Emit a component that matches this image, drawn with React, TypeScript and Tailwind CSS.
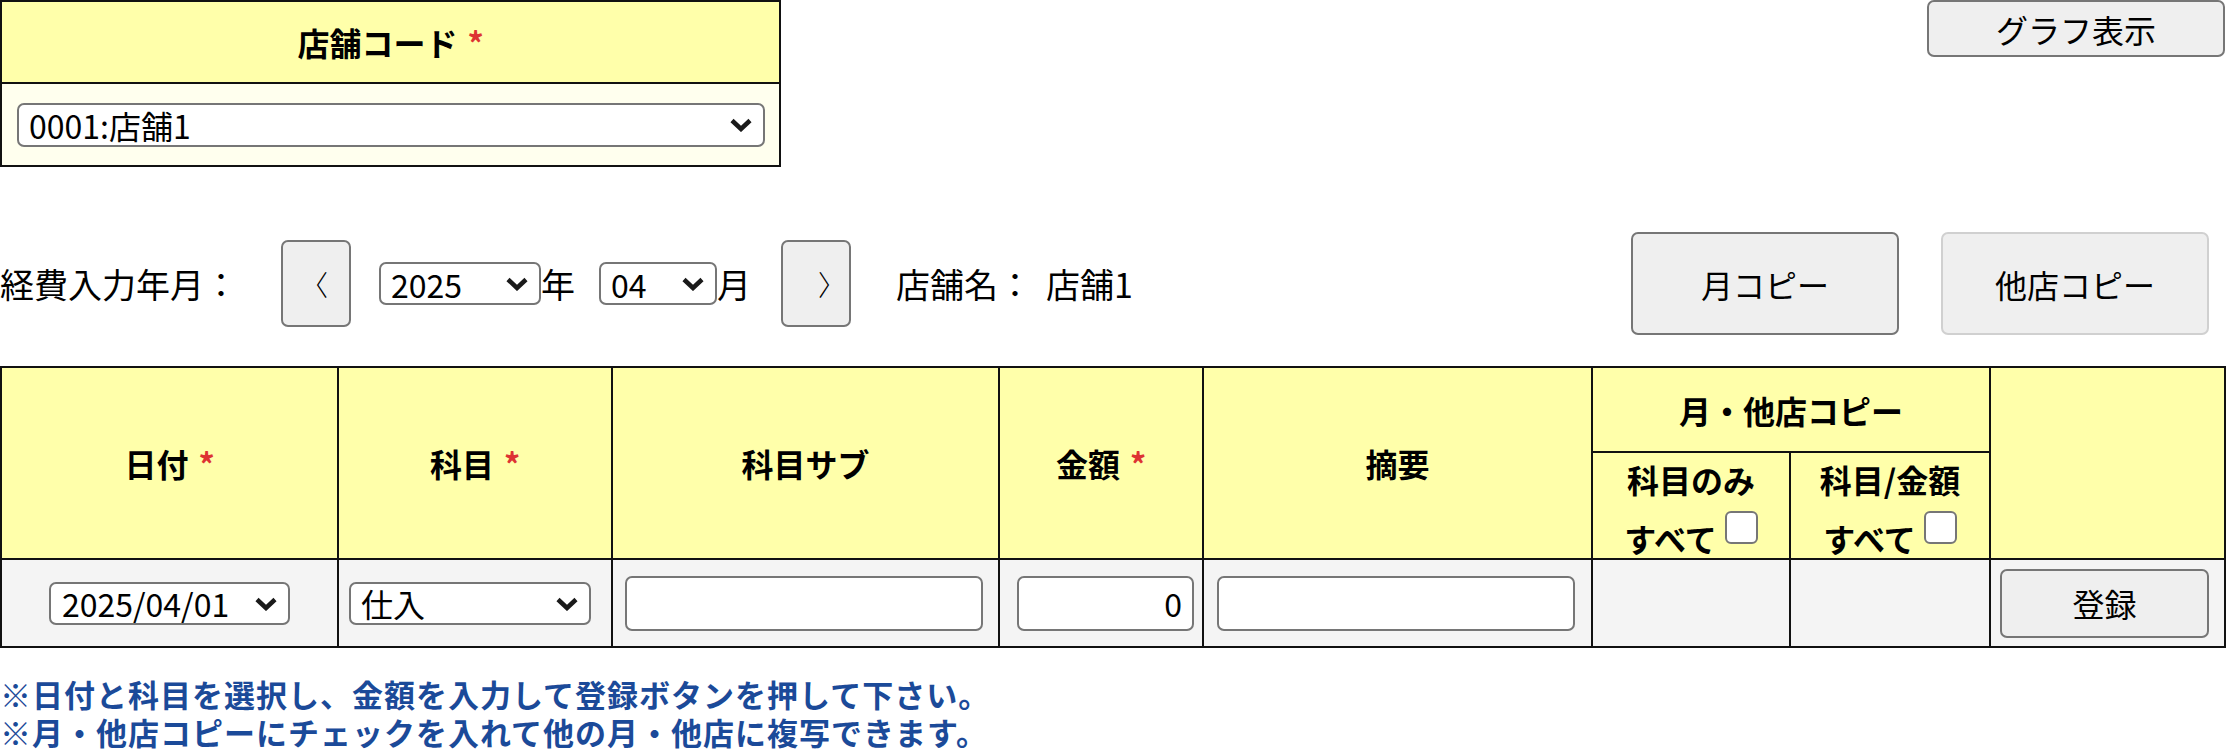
import React from "react";

const Chevron = () => (
  <svg width="24" height="15" viewBox="0 0 24 15" className="shrink-0">
    <path d="M3 3.5 L12 12 L21 3.5" fill="none" stroke="#1a1a1a" strokeWidth="4.5" strokeLinecap="butt" strokeLinejoin="miter" />
  </svg>
);

function FakeSelect({ value, className }: { value: string; className: string }) {
  return (
    <div
      className={`flex items-center justify-between bg-white border-2 border-[#767676] rounded-[7px] pl-[10px] pr-[10px] text-[32px] leading-none whitespace-nowrap ${className}`}
    >
      <span>{value}</span>
      <Chevron />
    </div>
  );
}

function Btn({ children, className }: { children: React.ReactNode; className: string }) {
  return (
    <button
      type="button"
      className={`shrink-0 flex items-center justify-center bg-[#efefef] border-2 rounded-[7px] text-[32px] leading-none text-black whitespace-nowrap ${className}`}
    >
      {children}
    </button>
  );
}

const Req = () => <span className="text-[#dd3333] ml-[10px]">*</span>;

const Checkbox = () => (
  <span className="inline-block w-[33px] h-[33px] bg-white border-2 border-[#767676] rounded-[6px] ml-[8px] mt-[12px]" />
);

export default function App() {
  return (
    <div className="w-[2226px] h-[754px] overflow-hidden bg-white text-black font-['Noto_Sans_CJK_JP','Noto_Sans',sans-serif] text-[32px]">
      {/* top area */}
      <div className="flex items-start justify-between">
        <div className="w-[781px] border-2 border-[#111]">
          <div className="h-[82px] bg-[#ffffaa] border-b-2 border-[#111] flex items-center justify-center font-bold leading-none">
            <span>店舗コード</span>
            <Req />
          </div>
          <div className="h-[81px] bg-[#ffffee] flex items-center pl-[15px]">
            <FakeSelect value="0001:店舗1" className="w-[748px] h-[44px]" />
          </div>
        </div>
        <Btn className="w-[298px] h-[57px] mr-[1px] border-[#767676]">グラフ表示</Btn>
      </div>

      {/* year/month row */}
      <div className="mt-[65px] h-[103px] flex items-center leading-none whitespace-nowrap">
        <div className="w-[281px] shrink-0 text-[34px]">経費入力年月：</div>
        <Btn className="w-[70px] h-[87px] border-[#767676]">
          <span className="text-[28px] font-light translate-x-[-2px]">〈</span>
        </Btn>
        <FakeSelect value="2025" className="ml-[28px] w-[162px] h-[43px] shrink-0" />
        <span className="w-[58px] shrink-0 text-[34px]">年</span>
        <FakeSelect value="04" className="w-[118px] h-[43px] shrink-0" />
        <span className="w-[64px] shrink-0 text-[34px]">月</span>
        <Btn className="w-[70px] h-[87px] border-[#767676]">
          <span className="text-[28px] font-light translate-x-[16px]">〉</span>
        </Btn>
        <span className="ml-[45px] text-[34px]">店舗名：</span>
        <span className="ml-[14px] text-[34px]">店舗1</span>
        <Btn className="ml-auto w-[268px] h-[103px] border-[#767676]">月コピー</Btn>
        <Btn className="ml-[42px] mr-[17px] w-[268px] h-[103px] border-[#d0d0d0]">他店コピー</Btn>
      </div>

      {/* main table */}
      <table className="mt-[31px] w-[2226px] table-fixed border-separate border-spacing-0 border-l-2 border-t-2 border-[#111]">
        <colgroup>
          <col className="w-[337px]" />
          <col className="w-[274px]" />
          <col className="w-[387px]" />
          <col className="w-[204px]" />
          <col className="w-[389px]" />
          <col className="w-[198px]" />
          <col className="w-[200px]" />
          <col className="w-[235px]" />
        </colgroup>
        <thead>
          <tr className="h-[85px]">
            <th rowSpan={2} className="p-0 border-r-2 border-b-2 border-[#111] bg-[#ffffaa] font-bold leading-none align-middle">
              日付<Req />
            </th>
            <th rowSpan={2} className="p-0 border-r-2 border-b-2 border-[#111] bg-[#ffffaa] font-bold leading-none align-middle">
              科目<Req />
            </th>
            <th rowSpan={2} className="p-0 border-r-2 border-b-2 border-[#111] bg-[#ffffaa] font-bold leading-none align-middle">
              科目サブ
            </th>
            <th rowSpan={2} className="p-0 border-r-2 border-b-2 border-[#111] bg-[#ffffaa] font-bold leading-none align-middle">
              金額<Req />
            </th>
            <th rowSpan={2} className="p-0 border-r-2 border-b-2 border-[#111] bg-[#ffffaa] font-bold leading-none align-middle">
              摘要
            </th>
            <th colSpan={2} className="p-0 border-r-2 border-b-2 border-[#111] bg-[#ffffaa] font-bold leading-none align-middle">
              月・他店コピー
            </th>
            <th rowSpan={2} className="p-0 border-r-2 border-b-2 border-[#111] bg-[#ffffaa]" />
          </tr>
          <tr className="h-[107px]">
            <th className="p-0 pt-[6px] border-r-2 border-b-2 border-[#111] bg-[#ffffaa] font-bold align-top">
              <div className="leading-[40px]">科目のみ</div>
              <div className="flex items-start justify-center">
                <span className="leading-[36px] mt-[21px]">すべて</span>
                <Checkbox />
              </div>
            </th>
            <th className="p-0 pt-[6px] border-r-2 border-b-2 border-[#111] bg-[#ffffaa] font-bold align-top">
              <div className="leading-[40px]">科目/金額</div>
              <div className="flex items-start justify-center">
                <span className="leading-[36px] mt-[21px]">すべて</span>
                <Checkbox />
              </div>
            </th>
          </tr>
        </thead>
        <tbody>
          <tr className="h-[88px] bg-[#f4f4f4]">
            <td className="p-0 border-r-2 border-b-2 border-[#111] align-middle">
              <div className="flex justify-center">
                <FakeSelect value="2025/04/01" className="w-[241px] h-[43px] pl-[11px]" />
              </div>
            </td>
            <td className="p-0 pl-[10px] border-r-2 border-b-2 border-[#111] align-middle">
              <FakeSelect value="仕入" className="w-[242px] h-[43px]" />
            </td>
            <td className="p-0 pl-[12px] border-r-2 border-b-2 border-[#111] align-middle">
              <input
                readOnly
                defaultValue=""
                className="block w-[358px] h-[55px] bg-white border-2 border-[#767676] rounded-[7px] px-[10px] text-[32px] outline-none"
              />
            </td>
            <td className="p-0 pl-[17px] border-r-2 border-b-2 border-[#111] align-middle">
              <input
                readOnly
                defaultValue="0"
                className="block w-[177px] h-[55px] bg-white border-2 border-[#767676] rounded-[7px] px-[10px] text-right text-[32px] outline-none"
              />
            </td>
            <td className="p-0 pl-[13px] border-r-2 border-b-2 border-[#111] align-middle">
              <input
                readOnly
                defaultValue=""
                className="block w-[358px] h-[55px] bg-white border-2 border-[#767676] rounded-[7px] px-[10px] text-[32px] outline-none"
              />
            </td>
            <td className="p-0 border-r-2 border-b-2 border-[#111]" />
            <td className="p-0 border-r-2 border-b-2 border-[#111]" />
            <td className="p-0 pl-[9px] border-r-2 border-b-2 border-[#111] align-middle">
              <Btn className="w-[209px] h-[69px] border-[#767676]">登録</Btn>
            </td>
          </tr>
        </tbody>
      </table>

      {/* notes */}
      <div className="mt-[27px] font-bold text-[31px] tracking-[1px] text-[#1b4a99] whitespace-nowrap">
        <div className="leading-[38px]">※日付と科目を選択し、金額を入力して登録ボタンを押して下さい。</div>
        <div className="leading-[38px]">※月・他店コピーにチェックを入れて他の月・他店に複写できます。</div>
      </div>
    </div>
  );
}
